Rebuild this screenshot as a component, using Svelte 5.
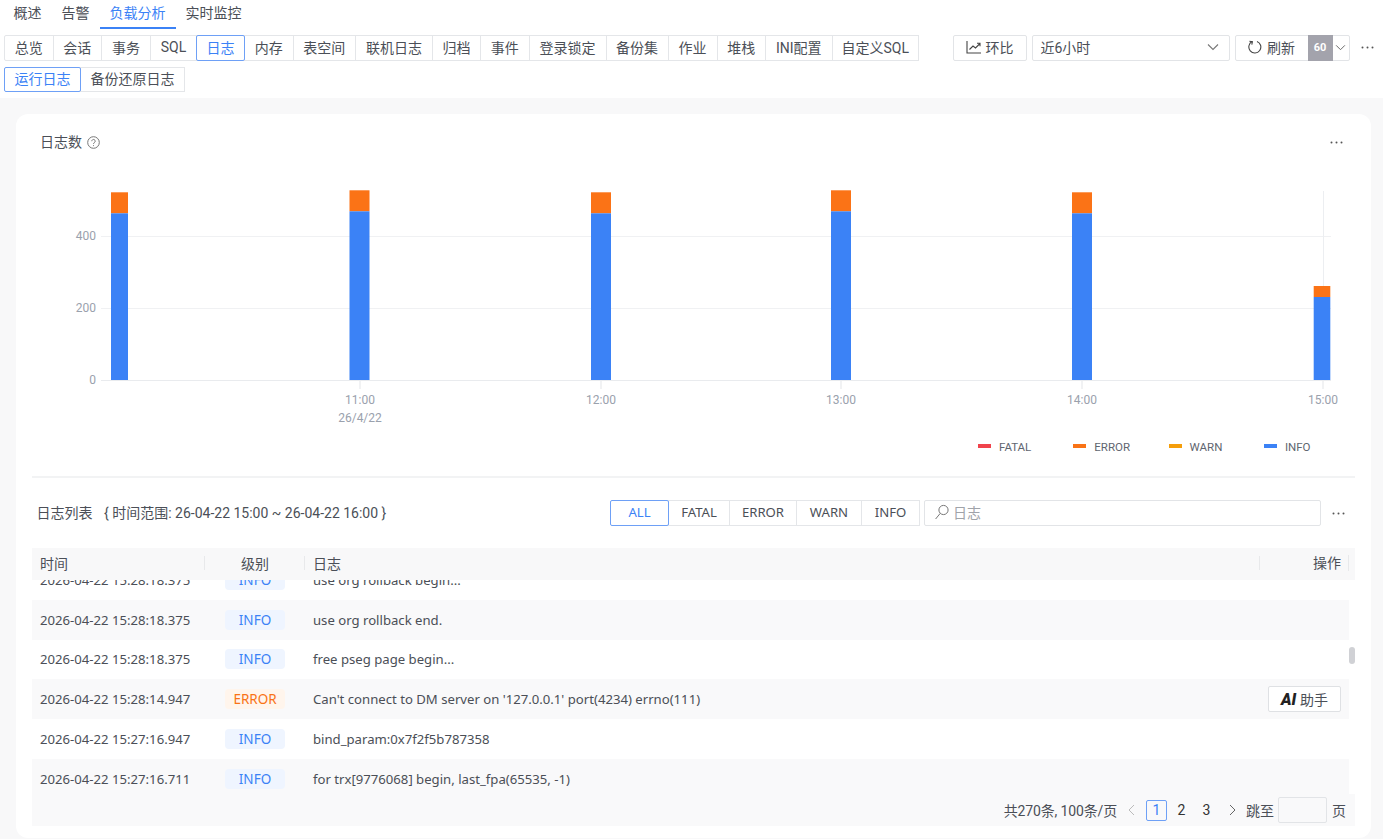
<script>
  const top = ['概述', '告警', '负载分析', '实时监控'];
  const subs = [
    ['总览', 49.5], ['会话', 49.5], ['事务', 50], ['SQL', 47], ['日志', 49], ['内存', 49.5], ['表空间', 63.5],
    ['联机日志', 78], ['归档', 49], ['事件', 49.5], ['登录锁定', 78], ['备份集', 63], ['作业', 50],
    ['堆栈', 49.5], ['INI配置', 67.5], ['自定义SQL', 87.5]
  ];
  const bars = [
    { x: 111, w: 17, top: 192.3, mid: 213.3 },
    { x: 349.5, w: 20, top: 190.3, mid: 211.3 },
    { x: 591, w: 20, top: 192.3, mid: 213.3 },
    { x: 831, w: 20, top: 190.3, mid: 211.3 },
    { x: 1072, w: 20, top: 192.3, mid: 213.3 },
    { x: 1313.7, w: 16.6, top: 286, mid: 297 }
  ];
  const ticks = [[360, '11:00'], [601, '12:00'], [841, '13:00'], [1082, '14:00'], [1323, '15:00']];
  const legend = [['FATAL', '#f0434c'], ['ERROR', '#f97316'], ['WARN', '#f59e0b'], ['INFO', '#3b82f6']];
  const levels = [['ALL', 59], ['FATAL', 62], ['ERROR', 68], ['WARN', 66], ['INFO', 59]];
  const rows = [
    ['2026-04-22 15:28:18.375', 'INFO', 'use org rollback begin...'],
    ['2026-04-22 15:28:18.375', 'INFO', 'use org rollback end.'],
    ['2026-04-22 15:28:18.375', 'INFO', 'free pseg page begin...'],
    ['2026-04-22 15:28:14.947', 'ERROR', "Can't connect to DM server on '127.0.0.1' port(4234) errno(111)"],
    ['2026-04-22 15:27:16.947', 'INFO', 'bind_param:0x7f2f5b787358'],
    ['2026-04-22 15:27:16.711', 'INFO', 'for trx[9776068] begin, last_fpa(65535, -1)']
  ];
</script>

{#snippet dots(cls)}
  <svg class={cls} width="13" height="3" viewBox="0 0 13 3" fill="#555"><circle cx="1.5" cy="1.5" r="1"/><circle cx="6.5" cy="1.5" r="1"/><circle cx="11.5" cy="1.5" r="1"/></svg>
{/snippet}

<div class="page">
  <header class="head">
    <nav class="tabs">
      {#each top as t, i}
        <span class="tab" class:on={i === 2}>{t}</span>
      {/each}
    </nav>
    <div class="toolrow">
      <div class="seg">
        {#each subs as [label, w], i}
          <span class="segitem" class:active={i === 4} style="width:{w}px">{label}</span>
        {/each}
      </div>
      <div class="tools">
        <button class="btn compare">
          <svg width="16" height="14" viewBox="0 0 16 14" fill="none" stroke="#444" stroke-width="1.1"><path d="M1 1v12h14"/><path d="M3.5 9.5l3.5-3.5 2.5 2 4.5-4.5M11 3.2h3v3"/></svg>
          环比
        </button>
        <div class="select"><span>近6小时</span>
          <svg width="12" height="8" viewBox="0 0 12 8" fill="none" stroke="#777" stroke-width="1.1"><path d="M1 1.5l5 5 5-5"/></svg>
        </div>
        <div class="refresh">
          <span class="rlabel">
            <svg width="14" height="14" viewBox="0 0 14 14" fill="none" stroke="#444" stroke-width="1.1"><path d="M4.2 1.6A6 6 0 1 0 9 1.4"/><path d="M1.4 1.2l3 .4-.6 3"/></svg>
            刷新
          </span>
          <span class="count">60</span>
          <span class="caret"><svg width="11" height="7" viewBox="0 0 12 8" fill="none" stroke="#666" stroke-width="1.1"><path d="M1 1.5l5 5 5-5"/></svg></span>
        </div>
        {@render dots('tooldots')}
      </div>
    </div>
    <div class="seg second">
      <span class="segitem active" style="width:77px">运行日志</span>
      <span class="segitem" style="width:105px">备份还原日志</span>
    </div>
  </header>

  <main class="body">
    <section class="card">
      <div class="charthead">
        <span class="title">日志数</span>
        <svg class="help" width="13" height="13" viewBox="0 0 13 13" fill="none" stroke="#777"><circle cx="6.5" cy="6.5" r="5.8"/><path d="M4.8 5.2a1.7 1.7 0 1 1 2.6 1.4c-.6.4-.9.7-.9 1.4"/><path d="M6.5 9.2v.9"/></svg>
        {@render dots('chartdots')}
      </div>
      <svg class="chart" width="1323" height="290" viewBox="32 160 1323 290">
        <line x1="101" x2="1331" y1="236.5" y2="236.5" stroke="#f0f1f3"/>
        <line x1="101" x2="1331" y1="308.5" y2="308.5" stroke="#f0f1f3"/>
        <line x1="1323.5" x2="1323.5" y1="191" y2="380" stroke="#eceef1"/>
        <line x1="101" x2="1331" y1="380.5" y2="380.5" stroke="#e9ebee"/>
        {#each bars as b}
          <rect x={b.x} y={b.top} width={b.w} height={b.mid - b.top} fill="#fb7316"/>
          <rect x={b.x} y={b.mid} width={b.w} height={380 - b.mid} fill="#3b82f6"/>
        {/each}
        {#each ticks as [x, t]}
          <line x1={x} x2={x} y1="381" y2="389" stroke="#e3e5e8"/>
          <text x={x} y="404" text-anchor="middle" class="axis">{t}</text>
        {/each}
        <text x="360" y="422" text-anchor="middle" class="axis">26/4/22</text>
        <text x="96" y="240" text-anchor="end" class="axis">400</text>
        <text x="96" y="312" text-anchor="end" class="axis">200</text>
        <text x="96" y="384" text-anchor="end" class="axis">0</text>
      </svg>
      <div class="legend">
        {#each legend as [name, c]}
          <span class="lg"><i style="background:{c}"></i>{name}</span>
        {/each}
      </div>

      <div class="listhead">
        <span class="listtitle">日志列表</span>
        <span class="range">{'{'} 时间范围: 26-04-22 15:00 ~ 26-04-22 16:00 {'}'}</span>
        <div class="seg levels">
          {#each levels as [l, w], i}
            <span class="segitem" class:active={i === 0} style="width:{w}px">{l}</span>
          {/each}
        </div>
        <div class="search">
          <svg width="16" height="16" viewBox="0 0 16 16" fill="none" stroke="#777" stroke-width="1"><circle cx="9.5" cy="6" r="4.6"/><path d="M6.2 9.4L1.6 15"/></svg>
          <span>日志</span>
        </div>
        {@render dots('listdots')}
      </div>

      <div class="table">
        <div class="thead">
          <span class="c1">时间</span>
          <span class="c2">级别</span>
          <span class="c3">日志</span>
          <span class="c4">操作</span>
        </div>
        <div class="tbody">
          <div class="rows">
            {#each rows as r, i}
              <div class="row" class:alt={i % 2 === 1}>
                <span class="c1">{r[0]}</span>
                <span class="c2"><em class="lvl" class:err={r[1] === 'ERROR'}>{r[1]}</em></span>
                <span class="c3">{r[2]}</span>
                {#if r[1] === 'ERROR'}
                  <span class="c4"><button class="ai"><b>AI</b> 助手</button></span>
                {/if}
              </div>
            {/each}
          </div>
          <i class="thumb"></i>
        </div>
        <div class="pager">
          <span class="total">共270条, 100条/页</span>
          <svg class="arrow" width="8" height="12" viewBox="0 0 8 12" fill="none" stroke="#bbb"><path d="M7 1L2 6l5 5"/></svg>
          <span class="pg cur">1</span>
          <span class="pg">2</span>
          <span class="pg">3</span>
          <svg class="arrow" width="8" height="12" viewBox="0 0 8 12" fill="none" stroke="#666"><path d="M1 1l5 5-5 5"/></svg>
          <span>跳至</span>
          <span class="jump"></span>
          <span>页</span>
        </div>
      </div>
    </section>
  </main>
</div>

<style>
  :global(body) {
    margin: 0;
    background: #fff;
    font-family: Roboto, "Noto Sans CJK SC", sans-serif;
    font-size: 14px;
    color: #4b4f57;
  }
  .page {
    width: 1383px;
    height: 839px;
    overflow: hidden;
    display: flex;
    flex-direction: column;
  }
  .head {
    height: 98px;
    flex: none;
    padding-left: 4px;
    box-sizing: border-box;
  }
  .tabs {
    display: flex;
    height: 29px;
    margin-left: -0.5px;
  }
  .tab {
    height: 29px;
    box-sizing: border-box;
    padding: 0 10px;
    line-height: 26px;
    white-space: nowrap;
  }
  .tab.on {
    color: #3b82f6;
    border-bottom: 2px solid #3b82f6;
  }
  .toolrow {
    display: flex;
    justify-content: space-between;
    margin-top: 6px;
    height: 25.5px;
  }
  .seg {
    display: flex;
    height: 25.5px;
    box-sizing: border-box;
  }
  .segitem {
    height: 25.5px;
    box-sizing: border-box;
    border: 1px solid #e4e6e9;
    margin-left: -1px;
    padding-bottom: 2px;
    display: flex;
    align-items: center;
    justify-content: center;
    background: #fff;
    white-space: nowrap;
  }
  .segitem:first-child {
    margin-left: 0;
    border-radius: 2px 0 0 2px;
  }
  .segitem.active {
    border-color: #6ea0f6;
    color: #3b82f6;
    position: relative;
    z-index: 1;
    border-radius: 2px;
  }
  .second {
    margin-top: 6px;
  }
  .tools {
    display: flex;
    align-items: center;
    margin-right: 9px;
  }
  .btn, .select, .refresh {
    height: 25.5px;
    box-sizing: border-box;
    border: 1px solid #e2e4e7;
    border-radius: 2px;
    background: #fff;
    color: #4b4f57;
    font: inherit;
    display: flex;
    align-items: center;
  }
  .compare {
    width: 74px;
    justify-content: center;
    gap: 4px;
    padding: 0 0 2px;
  }
  .select {
    width: 198px;
    margin-left: 5px;
    padding: 0 10px 2px 8px;
    justify-content: space-between;
  }
  .refresh {
    width: 115px;
    margin-left: 5px;
  }
  .rlabel {
    width: 72px;
    display: flex;
    gap: 5px;
    align-items: center;
    justify-content: center;
    padding-bottom: 2px;
  }
  .count {
    width: 25px;
    height: 25.5px;
    background: #a3a3ac;
    color: #fff;
    font-size: 11px;
    font-weight: 700;
    display: flex;
    align-items: center;
    justify-content: center;
    margin: -1px 0;
  }
  .caret {
    flex: 1;
    display: flex;
    justify-content: center;
  }
  .tooldots {
    margin-left: 11.5px;
  }
  .body {
    flex: 1;
    min-height: 0;
    background: #f8f8f9;
    padding: 16px 12px 0 16px;
  }
  .card {
    background: #fff;
    height: 724px;
    border-radius: 12px;
    padding: 0 16px;
    box-sizing: border-box;
  }
  .charthead {
    height: 46px;
    padding: 10px 8px 0 8px;
    box-sizing: border-box;
    display: flex;
    align-items: center;
    line-height: 22px;
  }
  .help {
    margin-left: 5px;
  }
  .chartdots {
    margin-left: auto;
    margin-right: 4px;
  }
  .chart {
    display: block;
    height: 290px;
    margin-bottom: -11px;
  }
  .axis {
    font-size: 12px;
    fill: #9aa1ad;
  }
  .legend {
    height: 39px;
    border-bottom: 2px solid #f2f3f4;
    display: flex;
    padding: 1px 0 0 946px;
    box-sizing: border-box;
    font-size: 11.5px;
    color: #5f6670;
  }
  .lg {
    display: flex;
    align-items: flex-start;
    gap: 8px;
    line-height: 14px;
    height: 14px;
    width: 95.3px;
    flex: none;
  }
  .lg i {
    width: 13px;
    height: 4px;
    margin-top: 4px;
  }
  .listhead {
    height: 70px;
    display: flex;
    align-items: center;
    padding-left: 4.5px;
    padding-right: 10px;
  }
  .listtitle, .range {
    padding-bottom: 2px;
  }
  .range {
    margin-left: 11.5px;
    flex: 1;
  }
  .levels .segitem {
    font-family: "Noto Sans", sans-serif;
    font-size: 13.15px;
  }
  .search {
    width: 397px;
    height: 26px;
    box-sizing: border-box;
    margin-left: 4px;
    border: 1px solid #e2e4e7;
    border-radius: 2px;
    display: flex;
    align-items: center;
    gap: 3px;
    padding: 0 0 2px 9px;
    color: #a0a3a9;
  }
  .listdots {
    margin-left: 11px;
  }
  .table {
    width: 1323px;
  }
  .thead, .row {
    display: grid;
    grid-template-columns: 173px 100px 955px 89px;
    align-items: center;
  }
  .row {
    width: 1317px;
    font-family: "Noto Sans", "Noto Sans CJK SC", sans-serif;
    font-size: 13.15px;
  }
  .thead {
    height: 32px;
    padding-bottom: 2px;
    box-sizing: border-box;
    background: #f8f8f9;
    position: relative;
    z-index: 1;
  }
  .thead .c1, .thead .c2, .thead .c3 {
    position: relative;
  }
  .thead .c1::after, .thead .c2::after, .thead .c3::after {
    content: "";
    position: absolute;
    right: 0;
    top: 3px;
    height: 14px;
    width: 1px;
    background: #e8e9eb;
  }
  .c1 { padding-left: 8px; }
  .c2 { text-align: center; }
  .c3 { padding-left: 8px; min-width: 0; }
  .c4 { text-align: right; padding-right: 8px; }
  .thead .c4 {
    border-right: 1px solid #e8e9eb;
    line-height: 16px;
    padding-right: 7px;
  }
  .tbody {
    height: 214px;
    overflow: hidden;
    position: relative;
  }
  .rows {
    margin-top: -20px;
  }
  .row {
    height: 39.75px;
    background: #fff;
  }
  .row.alt {
    background: #f9f9fa;
  }
  .lvl {
    display: inline-block;
    width: 60px;
    height: 20px;
    line-height: 20px;
    border-radius: 4px;
    background: #eff5ff;
    color: #3b82f6;
    font-style: normal;
    font-size: 13.5px;
  }
  .lvl.err {
    background: #fff5ec;
    color: #f97316;
  }
  .ai {
    width: 73px;
    height: 25.5px;
    padding: 0;
    border: 1px solid #dfe1e4;
    border-radius: 2px;
    background: #fff;
    font: inherit;
    font-size: 14px;
    color: #4b4f57;
    display: inline-block;
    vertical-align: middle;
  }
  .ai b {
    font-family: Roboto, sans-serif;
    font-style: italic;
    font-weight: 900;
    color: #222;
    font-size: 16px;
  }
  .thumb {
    position: absolute;
    right: 0;
    top: 67px;
    width: 6px;
    height: 17px;
    border-radius: 3px;
    background: #d0d1d5;
  }
  .pager {
    height: 32px;
    background: #f9f9fa;
    display: flex;
    align-items: center;
    justify-content: flex-end;
    padding: 0 9px 1px 0;
    box-sizing: border-box;
    white-space: nowrap;
  }
  .total {
    letter-spacing: -0.15px;
  }
  .arrow {
    margin: 0 9px 0 10px;
  }
  .pg {
    width: 21px;
    height: 21px;
    line-height: 19px;
    box-sizing: border-box;
    text-align: center;
    margin: 1px 2px 0;
    border: 1px solid transparent;
    color: #333;
  }
  .pg.cur {
    border-color: #6ea0f6;
    color: #3b82f6;
    border-radius: 2px;
  }
  .jump {
    width: 49px;
    height: 26px;
    box-sizing: border-box;
    border: 1px solid #e2e4e7;
    margin: 0 5px 0 4px;
    border-radius: 2px;
  }
</style>
